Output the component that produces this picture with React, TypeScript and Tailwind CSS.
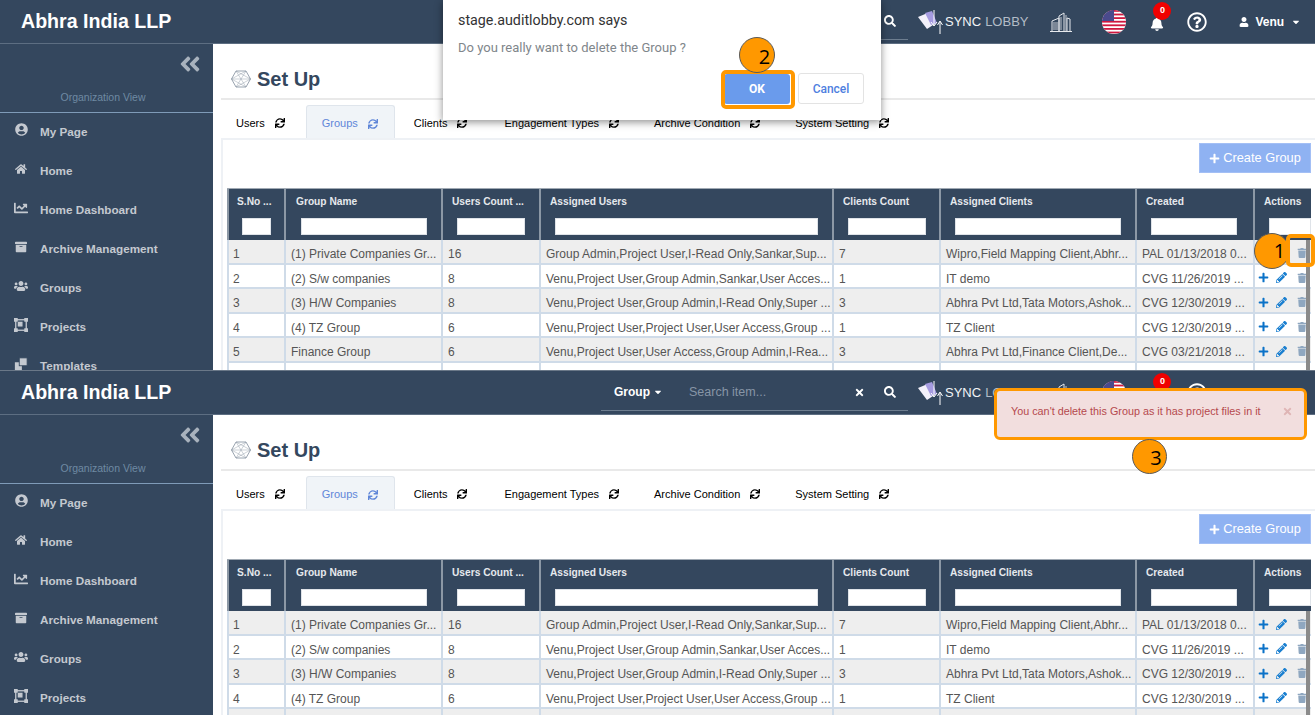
import { FaAngleDoubleLeft, FaArchive, FaBell, FaCaretDown, FaChartLine, FaHome, FaPencilAlt, FaPlus, FaRegQuestionCircle, FaSearch, FaSync, FaTimes, FaTrash, FaUser, FaUserCircle, FaUsers } from "react-icons/fa";
import type { ReactNode } from "react";

const columns = "grid grid-cols-[59px_157px_98px_293px_107px_196px_118px_56px]";

const headers = [
  { label: "S.No ...", input: "ml-[13px] w-[29px]", labelPad: "pl-[8px]" },
  { label: "Group Name", input: "ml-[15px] w-[126px]", labelPad: "pl-[10px]" },
  { label: "Users Count ...", input: "ml-[14px] w-[68px]", labelPad: "pl-[9px]" },
  { label: "Assigned Users", input: "ml-[14px] w-[263px]", labelPad: "pl-[9px]" },
  { label: "Clients Count", input: "ml-[14px] w-[78px]", labelPad: "pl-[9px]" },
  { label: "Assigned Clients", input: "ml-[14px] w-[166px]", labelPad: "pl-[9px]" },
  { label: "Created", input: "ml-[14px] w-[86px]", labelPad: "pl-[9px]" },
  { label: "Actions", input: "ml-[14px] w-[42px]", labelPad: "pl-[9px]" },
];

const rows = [
  ["1", "(1) Private Companies Gr...", "16", "Group Admin,Project User,I-Read Only,Sankar,Sup...", "7", "Wipro,Field Mapping Client,Abhr...", "PAL 01/13/2018 0..."],
  ["2", "(2) S/w companies", "8", "Venu,Project User,Group Admin,Sankar,User Acces...", "1", "IT demo", "CVG 11/26/2019 ..."],
  ["3", "(3) H/W Companies", "8", "Venu,Project User,Group Admin,I-Read Only,Super ...", "3", "Abhra Pvt Ltd,Tata Motors,Ashok...", "CVG 12/30/2019 ..."],
  ["4", "(4) TZ Group", "6", "Venu,Project User,Project User,User Access,Group ...", "1", "TZ Client", "CVG 12/30/2019 ..."],
  ["5", "Finance Group", "6", "Venu,Project User,User Access,Group Admin,I-Rea...", "3", "Abhra Pvt Ltd,Finance Client,De...", "CVG 03/21/2018 ..."],
  ["", "", "", "", "", "", ""],
];

const tabs = ["Users", "Groups", "Clients", "Engagement Types", "Archive Condition", "System Setting"];

function ProjectsIcon() {
  return (
    <svg viewBox="0 0 16 16" className="h-[14px] w-[14px]" fill="none" stroke="#c4c9d0" strokeWidth="1.5">
      <rect x="2" y="2" width="12" height="12" />
      <rect x="0.5" y="0.5" width="3" height="3" fill="#c4c9d0" />
      <rect x="12.5" y="0.5" width="3" height="3" fill="#c4c9d0" />
      <rect x="0.5" y="12.5" width="3" height="3" fill="#c4c9d0" />
      <rect x="12.5" y="12.5" width="3" height="3" fill="#c4c9d0" />
      <rect x="5" y="5" width="4" height="4" fill="#c4c9d0" />
    </svg>
  );
}

function TemplatesIcon() {
  return (
    <svg viewBox="0 0 16 16" className="h-[14px] w-[14px]" fill="#c4c9d0">
      <rect x="1" y="6" width="8" height="9" />
      <rect x="6" y="1" width="9" height="9" stroke="#34475e" />
    </svg>
  );
}

const menu: { label: string; icon: ReactNode }[] = [
  { label: "My Page", icon: <FaUserCircle className="text-[13px]" /> },
  { label: "Home", icon: <FaHome className="text-[12px]" /> },
  { label: "Home Dashboard", icon: <FaChartLine className="text-[14px]" /> },
  { label: "Archive Management", icon: <FaArchive className="text-[12px]" /> },
  { label: "Groups", icon: <FaUsers className="text-[14px]" /> },
  { label: "Projects", icon: <ProjectsIcon /> },
  { label: "Templates", icon: <TemplatesIcon /> },
];

function HexIcon() {
  return (
    <svg viewBox="0 0 20 18" className="h-[18px] w-[20px]" fill="none" stroke="#8d99a6" strokeWidth="0.9">
      <path d="M5 1h10l4.500 8-4.500 8H5L.5 9z" />
      <path d="M5 1l10 16M15 1L5 17M.5 9h19M5 1l14.500 8M15 1L.5 9M5 17l14.500-8M15 17L.5 9" strokeWidth="0.45" />
    </svg>
  );
}

function SyncLogo() {
  return (
    <svg viewBox="0 0 28 24" className="h-[24px] w-[28px]">
      <path d="M1 7l12-5 6 11-9 6z" fill="#f3f1fb" />
      <path d="M8 3l7-2 5 12-6 2z" fill="#a59be0" />
      <path d="M17 0v15M14 12l3 4 3-4M23 24V12M20.500 15l2.500-4 2.500 4" stroke="#fff" strokeWidth="1" fill="none" />
    </svg>
  );
}

function BuildingIcon() {
  return (
    <svg viewBox="0 0 22 20" className="h-[20px] w-[22px]" fill="none" stroke="#e6e9ed" strokeWidth="1">
      <path d="M0 19.500h22M2 19V9l7-3v13M9 19V4l5-3v18M17 19V6l3 1v12" />
      <path d="M3 11h5M3 13h5M3 15h5M3 17h5M11 5v13M16 3v16" strokeWidth="0.8" />
    </svg>
  );
}

function FlagIcon() {
  const stripes = [0, 3.6, 7.2, 10.8, 14.4, 18, 21.6];
  return (
    <svg viewBox="0 0 24 24" className="h-[24px] w-[24px]">
      <clipPath id="flagclip">
        <circle cx="12" cy="12" r="12" />
      </clipPath>
      <g clipPath="url(#flagclip)">
        <rect width="24" height="24" fill="#fff" />
        {stripes.map((y) => (
          <rect key={y} x="0" y={y} width="24" height="1.800" fill="#d0173f" />
        ))}
        <rect width="12" height="11" fill="#4a4a8c" />
      </g>
    </svg>
  );
}

function Header({ searchVisible }: { searchVisible: boolean }) {
  return (
    <header className="flex h-[43px] shrink-0 items-center bg-[#34475e] text-white">
      <div className="w-[601px] pl-[21px] text-[19.600px] font-bold leading-none">Abhra India LLP</div>
      <div className="flex h-[36px] w-[307px] items-center border-b border-[#6d7d8f] text-[12px]">
        {searchVisible && (
          <>
            <span className="ml-[13px] font-bold">Group</span>
            <FaCaretDown className="ml-[3px] text-[10px]" />
            <span className="ml-[26px] w-[164px] text-[12.500px] text-[#8795a6]">Search item...</span>
            <FaTimes className="ml-[1px] text-[11px]" />
          </>
        )}
        <FaSearch className="ml-auto mr-[12px] text-[12px]" />
      </div>
      <div className="ml-[9px] flex items-center">
        <SyncLogo />
        <span className="text-[13px] font-medium leading-none text-[#f2f4f6]">SYNC</span>
        <span className="ml-[4px] text-[13px] font-light leading-none text-[#b3bcc7]">LOBBY</span>
      </div>
      <div className="ml-[22px]">
        <BuildingIcon />
      </div>
      <div className="ml-[30px]">
        <FlagIcon />
      </div>
      <div className="relative ml-[24px]">
        <FaBell className="mt-[5px] text-[14px]" />
        <span className="absolute left-[3px] top-[-10px] flex h-[18px] w-[18px] items-center justify-center rounded-full bg-[#f00000] text-[9px] font-bold">0</span>
      </div>
      <FaRegQuestionCircle className="ml-[23px] text-[20px]" />
      <FaUser className="ml-[32px] text-[10px]" />
      <span className="ml-[6px] text-[12px] font-bold">Venu</span>
      <FaCaretDown className="ml-[7px] text-[10px]" />
    </header>
  );
}

function Sidebar() {
  return (
    <aside className="w-[213px] shrink-0 bg-[#34475e]">
      <div className="flex h-[69px] flex-col border-b border-[#7f9bb8]">
        <FaAngleDoubleLeft className="ml-[178px] mt-[8px] text-[24px] text-[#a8b2bd]" />
        <div className="mt-[14px] pr-[7px] text-center text-[10.500px] text-[#6f8aa3]">Organization View</div>
      </div>
      <nav>
        {menu.map((item) => (
          <div key={item.label} className="flex h-[39px] items-center text-[#c4c9d0]">
            <span className="flex w-[40px] justify-center pb-[6px] pl-[2px]">{item.icon}</span>
            <span className="pb-[2px] text-[11.700px] font-bold">{item.label}</span>
          </div>
        ))}
      </nav>
    </aside>
  );
}

function GroupTable() {
  return (
    <div className="relative w-[1084px]">
      <div className={`${columns} h-[52px] border-t border-[#a0a9b3] bg-[#34475e] text-[10.200px] font-bold text-[#e6e9ed]`}>
        {headers.map((h) => (
          <div key={h.label} className="h-full border-r-2 border-[#8c98a5] first:border-l-2 last:border-r-0">
            <div className={`mt-[6px] h-[17px] leading-[14px] whitespace-nowrap ${h.labelPad}`}>{h.label}</div>
            <div className={`${h.input} mt-[6px] h-[17px] border border-[#dfe3e8] bg-white`} />
          </div>
        ))}
      </div>
      {rows.map((row, i) => (
        <div key={i} className={`${columns} h-[24.500px] border-b-2 border-[#cfdbe8] text-[12px] leading-[22px] text-[#555] ${i % 2 === 0 ? "bg-[#eeeeee]" : "bg-white"}`}>
          {row.map((cell, c) => (
            <div key={c} className="overflow-hidden whitespace-nowrap border-r-2 border-[#cfdbe8] pl-[5px] pt-[3px] first:border-l-2 first:pl-[4px]">
              {cell}
            </div>
          ))}
          <div className="flex items-center overflow-hidden pl-[3px] pt-[4px]">
            {row[0] && (
              <>
                <FaPlus className="shrink-0 text-[11px] text-[#0b72c8]" />
                <FaPencilAlt className="ml-[7px] shrink-0 text-[11px] text-[#1a7fd0]" />
                <FaTrash className="ml-[10px] shrink-0 text-[10px] text-[#8fa7c0]" />
              </>
            )}
          </div>
        </div>
      ))}
      <div className="absolute left-[1079px] top-[52px] h-[140px] w-[4px] bg-[#8a8a8a]" />
    </div>
  );
}

function Screen({ height, searchVisible, lined }: { height: string; searchVisible: boolean; lined?: boolean }) {
  return (
    <section className={`flex flex-col overflow-hidden ${height} ${lined ? "border-t border-[#6a7888]" : ""}`}>
      <Header searchVisible={searchVisible} />
      <div className="flex min-h-0 flex-1 border-t border-[#5d6e82]">
        <Sidebar />
        <main className="min-w-0 flex-1 bg-white pl-2">
          <div className="flex h-[56px] items-center border-b-2 border-[#e9e9e9] pl-[10px] pt-[15px]">
            <HexIcon />
            <h1 className="ml-[6px] text-[20px] font-bold leading-none text-[#34475e]">Set Up</h1>
          </div>
          <div className="mt-[5px] flex h-[33px] gap-[3px]">
            {tabs.map((t) => (
              <div
                key={t}
                className={
                  t === "Groups"
                    ? "ml-[2px] flex items-center rounded-t-[3px] border border-b-0 border-[#dfe5ec] bg-[#f0f4f8] pl-[15px] pr-[16px] pt-[3px] text-[#5f86d8]"
                    : `flex items-center border border-transparent px-[15px] pt-[3px] text-black ${t === "Clients" ? "mr-[2px]" : ""} ${t === "Users" ? "-ml-[1px]" : ""}`
                }
              >
                <span className="text-[11px]">{t}</span>
                <FaSync className="ml-[10px] text-[10px]" />
              </div>
            ))}
          </div>
          <div className="border-l-2 border-t-2 border-[#eef1f5] pl-[4px]">
            <div className="flex h-[48px] w-[1084px] justify-end pt-[3px]">
              <button className="flex h-[30px] w-[112px] items-center justify-center gap-[3px] border border-[#a3bff5] bg-[#8fb2f2] text-[12.800px] text-white">
                <FaPlus className="text-[11px]" />
                Create Group
              </button>
            </div>
            <GroupTable />
          </div>
        </main>
      </div>
    </section>
  );
}

function Marker({ label, className }: { label: string; className: string }) {
  return (
    <div className={`absolute flex items-center justify-center rounded-full border border-[#5a5a5a] bg-[#ff9800] font-['Open_Sans',sans-serif] text-[20px] leading-none text-black ${className}`}>
      {label}
    </div>
  );
}

export default function App() {
  return (
    <div className="relative h-[715px] w-[1315px] overflow-hidden bg-white font-['Liberation_Sans',Arial,sans-serif]">
      <Screen height="h-[370px]" searchVisible={false} />
      <Screen height="h-[345px]" searchVisible lined />

      {/* browser confirm */}
      <div className="absolute left-[443px] top-0 h-[120px] w-[438px] bg-white shadow-[0_2px_8px_rgba(0,0,0,0.45)] font-['Roboto',sans-serif]">
        <div className="absolute left-[15px] top-[11px] text-[14.300px] leading-[18px] text-[#333]">stage.auditlobby.com says</div>
        <div className="absolute left-[15px] top-[40px] text-[13px] leading-[16px] text-[#80868b]">Do you really want to delete the Group ?</div>
        <button className="absolute left-[281px] top-[74px] h-[30px] w-[66px] rounded-[3px] bg-[#6a9bec] text-[12px] font-bold text-white">OK</button>
        <button className="absolute left-[355px] top-[73px] h-[31px] w-[66px] rounded-[3px] border border-[#e3e3e3] bg-white text-[12px] font-medium text-[#4f7fe0]">Cancel</button>
      </div>
      <div className="absolute left-[721px] top-[70px] h-[39px] w-[74px] rounded-[5px] border-[4px] border-[#ff9800]" />
      <Marker label="2" className="left-[739px] top-[37px] h-[36px] w-[36px] pl-[15px] pt-[4px]" />

      {/* step 1 */}
      <Marker label="1" className="left-[1254px] top-[233px] h-[36px] w-[36px] pl-[15px]" />
      <div className="absolute left-[1286px] top-[234px] h-[33px] w-[29px] rounded-[5px] border-[4px] border-[#ff9800]" />

      {/* step 3 */}
      <div className="absolute left-[994px] top-[388px] flex h-[52px] w-[313px] items-center rounded-[6px] border-[3px] border-[#ff9800] bg-[#f2dede] pb-[6px] pl-[14px] text-[10.800px] text-[#b5494d]">
        You can't delete this Group as it has project files in it
        <FaTimes className="ml-[21px] text-[11px] text-[#dfb5b5]" />
      </div>
      <Marker label="3" className="left-[1132px] top-[439px] h-[35px] w-[35px] pl-[13px] pt-[2px]" />
    </div>
  );
}
